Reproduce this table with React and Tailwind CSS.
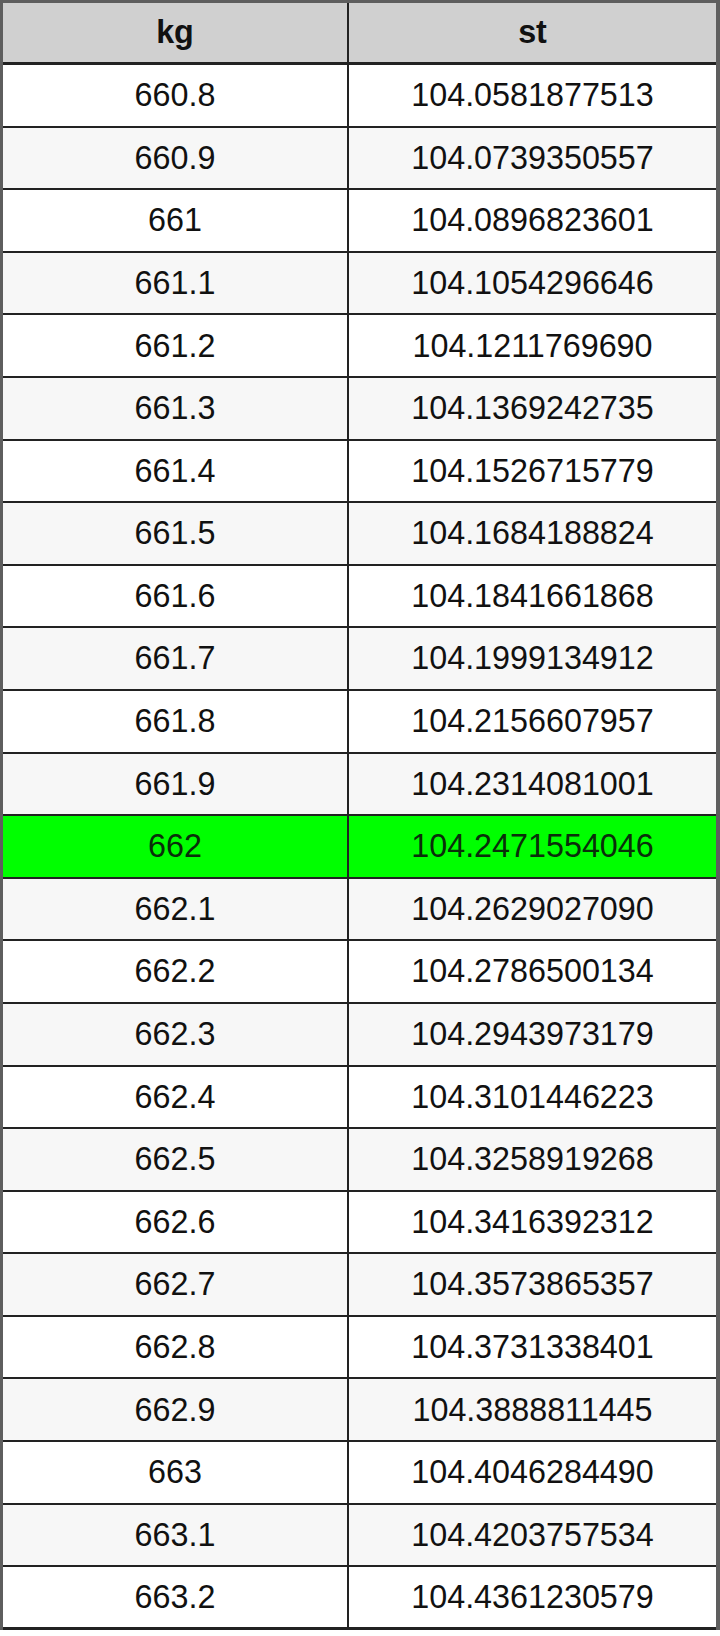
import React from "react";

const rows = [
  ["660.8", "104.0581877513"],
  ["660.9", "104.0739350557"],
  ["661", "104.0896823601"],
  ["661.1", "104.1054296646"],
  ["661.2", "104.1211769690"],
  ["661.3", "104.1369242735"],
  ["661.4", "104.1526715779"],
  ["661.5", "104.1684188824"],
  ["661.6", "104.1841661868"],
  ["661.7", "104.1999134912"],
  ["661.8", "104.2156607957"],
  ["661.9", "104.2314081001"],
  ["662", "104.2471554046"],
  ["662.1", "104.2629027090"],
  ["662.2", "104.2786500134"],
  ["662.3", "104.2943973179"],
  ["662.4", "104.3101446223"],
  ["662.5", "104.3258919268"],
  ["662.6", "104.3416392312"],
  ["662.7", "104.3573865357"],
  ["662.8", "104.3731338401"],
  ["662.9", "104.3888811445"],
  ["663", "104.4046284490"],
  ["663.1", "104.4203757534"],
  ["663.2", "104.4361230579"],
];

export default function App() {
  return (
    <div className="w-[720px] h-[1636px] bg-white" style={{ fontFamily: '"Liberation Sans", Arial, sans-serif' }}>
      <div className="w-[720px] border-l-[3px] border-r-[4px] border-t-[3px] border-[#5e5e5e] text-[32.3px] leading-none text-[#111]">
        <div className="flex h-[62px] bg-[#d0d0d0] border-b-[3px] border-[#222] font-bold">
          <div className="w-[346px] flex items-center justify-center border-r-2 border-[#222]">kg</div>
          <div className="flex-1 flex items-center justify-center">st</div>
        </div>
        {rows.map(([a, b], i) => {
          const hl = a === "662";
          const last = i === rows.length - 1;
          const bg = hl ? "bg-[#00ff00] text-[#0a2e0a]" : i % 2 === 1 ? "bg-[#f7f7f7]" : "bg-white";
          return (
            <div
              key={a}
              className={`flex ${last ? "h-[63px] border-b-[3px]" : "h-[62.6px] border-b-2"} border-[#222] ${bg}`}
            >
              <div className="w-[346px] flex items-center justify-center border-r-2 border-[#222]">{a}</div>
              <div className="flex-1 flex items-center justify-center">{b}</div>
            </div>
          );
        })}
      </div>
    </div>
  );
}
